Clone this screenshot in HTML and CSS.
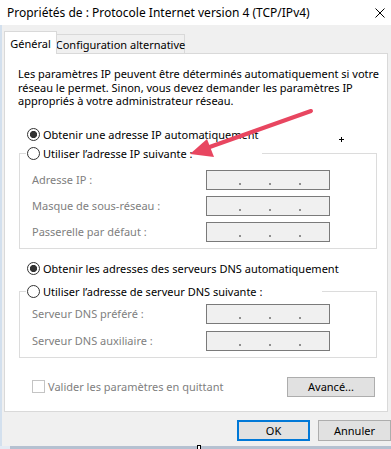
FILE: index.html
```html
<html>
<head>
    <title>Propriétés de : Protocole Internet version 4 (TCP/IPv4)</title>
    <link rel="stylesheet" href="styles.css">
</head>
<body>
<div class="window">
    <div class="titlebar">
        <span class="title">Propriétés de : Protocole Internet version 4 (TCP/IPv4)</span>
        <svg class="close" width="10" height="10" viewBox="0 0 10 10">
            <path d="M0.5 0.5 L9.5 9.5 M9.5 0.5 L0.5 9.5" stroke="#000" stroke-width="1" fill="none" />
        </svg>
    </div>

    <div class="content">
        <div class="tabs">
            <div class="tab active">Général</div>
            <div class="tab">Configuration alternative</div>
        </div>

        <div class="panel">
            <p class="intro">Les paramètres IP peuvent être déterminés automatiquement si votre<br>réseau le permet. Sinon, vous devez demander les paramètres IP<br>appropriés à votre administrateur réseau.</p>

            <div class="option first"><span class="radio checked"></span>Obtenir une adresse IP automatiquement</div>

            <fieldset class="group group-ip">
                <legend class="legend legend-ip"><span class="radio"></span>Utiliser l’adresse IP suivante :</legend>
                <div class="fields">
                    <label>Adresse IP :</label>
                    <div class="ip"><i></i><i></i><i></i></div>
                    <label>Masque de sous-réseau :</label>
                    <div class="ip"><i></i><i></i><i></i></div>
                    <label>Passerelle par défaut :</label>
                    <div class="ip"><i></i><i></i><i></i></div>
                </div>
            </fieldset>

            <div class="option dns-auto"><span class="radio checked"></span>Obtenir les adresses des serveurs DNS automatiquement</div>

            <fieldset class="group group-dns">
                <legend class="legend legend-dns"><span class="radio"></span>Utiliser l’adresse de serveur DNS suivante :</legend>
                <div class="fields">
                    <label>Serveur DNS préféré :</label>
                    <div class="ip"><i></i><i></i><i></i></div>
                    <label>Serveur DNS auxiliaire :</label>
                    <div class="ip"><i></i><i></i><i></i></div>
                </div>
            </fieldset>

            <div class="bottom-row">
                <label class="check"><span class="box"></span>Valider les paramètres en quittant</label>
                <button class="btn advanced">Avancé...</button>
            </div>
        </div>

        <div class="footer">
            <button class="btn default">OK</button>
            <button class="btn">Annuler</button>
        </div>
    </div>
    <div class="edge"></div>
</div>

<svg class="overlay" width="391" height="449" viewBox="0 0 391 449">
    <!-- arrow pointing at the manual IP option -->
    <line x1="311" y1="111" x2="204" y2="149" stroke="#e84660" stroke-width="4" stroke-linecap="round" />
    <polygon points="190,154 207,139 214,157" fill="#e84660" />
    <!-- mouse crosshair -->
    <path d="M339 139.5 H344 M341.5 137 V142" stroke="#000" stroke-width="1" />
    <rect x="197.5" y="445.5" width="3" height="4" fill="#fff" stroke="#000" stroke-width="1" />
</svg>
</body>
</html>
```

FILE: styles.css
```css
body {
    margin: 0;
    font-family: "Noto Sans", sans-serif;
    font-size: 11px;
    color: #000;
    background: #f0f0f0;
}
.window {
    width: 391px;
    height: 449px;
    display: flex;
    flex-direction: column;
    background: #f0f0f0;
    overflow: hidden;
}
.titlebar {
    height: 25px;
    flex: none;
    background: #fff;
    display: flex;
    align-items: center;
    justify-content: space-between;
    padding: 0 6px 0 7px;
    font-size: 12px;
}
.content {
    flex: 1;
    border-left: 2px solid #d3e0ee;
}
.tabs {
    display: flex;
    align-items: flex-end;
    padding: 6px 0 0 2px;
    margin-bottom: -1px;
}
.tab {
    box-sizing: border-box;
    height: 20px;
    width: 128px;
    border: 1px solid #d9d9d9;
    border-left: none;
    background: #f0f0f0;
    display: flex;
    align-items: center;
    justify-content: center;
    padding-top: 1px;
    white-space: nowrap;
}
.tab.active {
    position: relative;
    z-index: 1;
    width: 53px;
    height: 23px;
    border-left: 1px solid #d9d9d9;
    border-bottom: none;
    background: #fff;
    padding-top: 0;
}
.panel {
    box-sizing: border-box;
    width: 384px;
    height: 359px;
    margin-left: 2px;
    padding-top: 13px;
    background: #fff;
    border: 1px solid #d9d9d9;
}
.intro {
    margin: 0 0 0 13px;
    line-height: 13.5px;
}
.option {
    height: 17px;
    display: flex;
    align-items: center;
    gap: 3px;
    padding-left: 22px;
}
.option.first {
    margin-top: 18px;
}
.option.dns-auto {
    margin-top: 11px;
}
.radio {
    box-sizing: border-box;
    width: 13px;
    height: 13px;
    border: 1px solid #333;
    border-radius: 50%;
    background: #fff;
    flex: none;
}
.radio.checked {
    background: radial-gradient(circle, #333 0, #333 3.3px, #fff 3.9px);
}
.group {
    border: 1px solid #dcdcdc;
    padding: 0 0 6px 6px;
    margin: 0 10px 0 14px;
    min-width: 0;
}
.group-ip {
    margin-top: 2px;
}
.group-dns {
    margin-top: 6px;
}
.legend {
    box-sizing: border-box;
    height: 17px;
    padding: 0 0 0 1px;
    display: flex;
    align-items: center;
    gap: 3px;
}
.legend-ip {
    width: 236px;
}
.legend-dns {
    width: 296px;
}
.fields {
    display: grid;
    grid-template-columns: 174px 124px;
    row-gap: 6px;
    margin-left: 6px;
    align-items: center;
}
.group-ip .fields {
    margin-top: 8px;
}
.group-dns .fields {
    margin-top: 4px;
    row-gap: 7px;
}
.fields label {
    color: #808080;
}
.ip {
    box-sizing: border-box;
    width: 124px;
    height: 20px;
    border: 1px solid #7a7a7a;
    background: #f0f0f0;
    display: flex;
    gap: 28px;
    padding: 12px 0 0 32px;
}
.ip i {
    width: 2px;
    height: 2px;
    background: #8f8f8f;
}
.bottom-row {
    margin-top: 19px;
    display: flex;
    align-items: center;
    justify-content: space-between;
    padding: 0 12px 0 27px;
}
.check {
    display: flex;
    align-items: center;
    gap: 3px;
    color: #808080;
}
.box {
    box-sizing: border-box;
    width: 13px;
    height: 13px;
    border: 1px solid #c4c4c4;
    background: #fff;
}
.btn {
    box-sizing: border-box;
    width: 73px;
    height: 21px;
    padding: 0;
    background: #e1e1e1;
    border: 1px solid #adadad;
    font-family: "Noto Sans", sans-serif;
    font-size: 11px;
    color: #000;
}
.btn.advanced {
    width: 88px;
    height: 20px;
}
.btn.default {
    border: 2px solid #0078d7;
}
.footer {
    display: flex;
    justify-content: flex-end;
    gap: 8px;
    padding: 8px 0 0;
}
.edge {
    margin-top: auto;
    height: 3px;
    flex: none;
    background: linear-gradient(to right, #e4ebf4 0, #e4ebf4 10px, #b5c1d1 10px);
}
.overlay {
    position: absolute;
    top: 0;
    left: 0;
    pointer-events: none;
}
```
